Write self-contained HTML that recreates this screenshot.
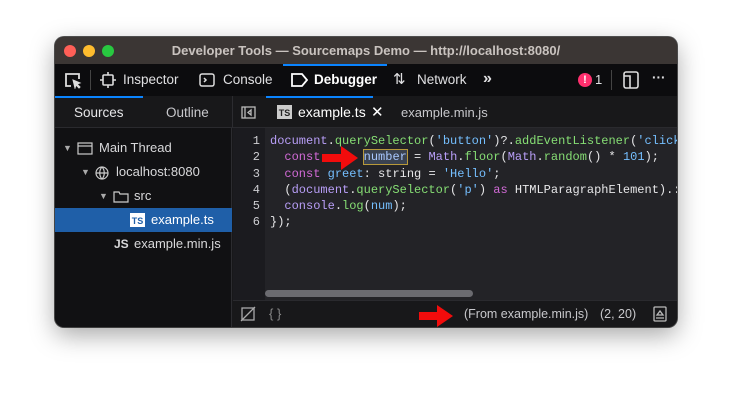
<!DOCTYPE html>
<html><head><meta charset="utf-8"><style>
*{box-sizing:border-box;margin:0;padding:0}
body{width:732px;height:401px;background:#fff;position:relative;overflow:hidden;font-family:"Liberation Sans",sans-serif}
.win{position:absolute;left:55px;top:37px;width:622px;height:290px;border-radius:9px;overflow:hidden;background:#18181a;box-shadow:0 8px 25px rgba(0,0,0,.35),0 0 0 1px #555}
.title{position:absolute;left:0;top:0;width:622px;height:27px;background:#3b3634;color:#c9c3bf;font-weight:bold;font-size:13px;text-align:center;line-height:27px}
.dot{position:absolute;top:8px;width:12px;height:12px;border-radius:50%}
.tb{position:absolute;left:0;top:27px;width:622px;height:32px;background:#0c0c0e;color:#e0e0e2;font-size:13.5px}
.tb span{position:absolute;top:8px}
.tabs{position:absolute;left:0;top:59px;width:622px;height:32px;background:#18181a;border-bottom:1px solid #2a2a2e;font-size:13.5px;color:#e6e6e8}
.side{position:absolute;left:0;top:91px;width:177px;height:199px;background:#111113;border-right:1px solid #2c2c30;color:#d8d8da;font-size:13px}
.side div{position:absolute;height:24px;line-height:24px}
.gut{position:absolute;left:178px;top:91px;width:32px;height:172px;background:#1b1b1f;color:#cfcfd3;font:12px "Liberation Mono",monospace;text-align:right;padding-right:5px;padding-top:5px;line-height:16.3px}
.code{position:absolute;left:210px;top:91px;width:412px;height:172px;background:#232327;font:12px "Liberation Mono",monospace;color:#e6e6e8;padding-left:5px;padding-top:5px;line-height:16.3px;white-space:pre;overflow:hidden}
.k{color:#d16ad6}.p{color:#b89ef7}.g{color:#86de74}.s{color:#75bfff}.n{color:#75bfff}
.bot{position:absolute;left:178px;top:263px;width:444px;height:27px;background:#18181a;border-top:1px solid #2a2a2e;color:#c8c8cc;font-size:12.5px;white-space:nowrap}
</style></head><body>
<div class="win">
<div class="title">Developer Tools — Sourcemaps Demo — http://localhost:8080/
<div class="dot" style="left:9px;background:#fe5f57"></div><div class="dot" style="left:28px;background:#febc2e"></div><div class="dot" style="left:47px;background:#28c840"></div></div>
<div class="tb">
<div style="position:absolute;left:228px;top:0;width:104px;height:2px;background:#0a84ff"></div>
<svg style="position:absolute;left:9px;top:8px" width="18" height="17" viewBox="0 0 18 17" fill="none" stroke="#ddd" stroke-width="1.8"><path d="M7 14H2V2h13v5"/><path d="M9 8l7 3-3 1 3 3-1 1-3-3-1 3z" fill="#ddd" stroke-width="1"/></svg>
<div style="position:absolute;left:35px;top:6px;width:1px;height:20px;background:#444"></div>
<svg style="position:absolute;left:45px;top:8px" width="16" height="16" viewBox="0 0 16 16" fill="none" stroke="#ddd" stroke-width="1.6"><rect x="3" y="3" width="10" height="10" rx="1"/><path d="M8 0v3M8 13v3M0 8h3M13 8h3"/></svg>
<span style="left:68px">Inspector</span>
<svg style="position:absolute;left:144px;top:8px" width="16" height="16" viewBox="0 0 16 16" fill="none" stroke="#ddd" stroke-width="1.5"><rect x="1" y="2" width="14" height="12" rx="2"/><path d="M5 6l2 2-2 2"/></svg>
<span style="left:168px">Console</span>
<svg style="position:absolute;left:236px;top:9px" width="17" height="14" viewBox="0 0 17 14" fill="none" stroke="#fff" stroke-width="1.8"><path d="M1 1h10l5 6-5 6H1z"/></svg>
<span style="left:259px;font-weight:bold;color:#fff">Debugger</span>
<span style="left:338px;font-size:15px;top:6px">⇅</span>
<span style="left:362px">Network</span>
<span style="left:428px;font-size:16px;top:6px;font-weight:bold">»</span>
<div style="position:absolute;left:523px;top:9px;width:14px;height:14px;border-radius:50%;background:#ff2f6d;color:#fff;font-size:11px;font-weight:bold;text-align:center;line-height:14px">!</div>
<span style="left:540px;font-size:13px">1</span>
<div style="position:absolute;left:556px;top:6px;width:1px;height:20px;background:#444"></div>
<svg style="position:absolute;left:568px;top:7px" width="16" height="18" viewBox="0 0 16 18" fill="none" stroke="#ddd" stroke-width="1.6"><rect x="1" y="1" width="14" height="16" rx="2"/><path d="M1 5h6v12"/></svg>
<span style="left:597px;top:6px;font-weight:bold">···</span>
</div>
<div class="tabs">
<div style="position:absolute;left:0;top:0;width:88px;height:2px;background:#0a84ff"></div>
<div style="position:absolute;left:211px;top:0;width:107px;height:2px;background:#0a84ff"></div>
<span style="position:absolute;left:19px;top:9px">Sources</span>
<span style="position:absolute;left:111px;top:9px;color:#c8c8cc">Outline</span>
<div style="position:absolute;left:177px;top:0;width:1px;height:32px;background:#2c2c30"></div>
<svg style="position:absolute;left:186px;top:10px" width="15" height="13" viewBox="0 0 15 13" fill="none" stroke="#bbb" stroke-width="1.3"><rect x="1" y="1" width="13" height="11"/><path d="M4 1v11M10 4l-3 2.5 3 2.5z"/></svg>
<div style="position:absolute;left:222px;top:9px;width:15px;height:14px;background:#ccc;color:#222;font-size:9px;font-weight:bold;line-height:16px;text-align:center">TS</div>
<span style="position:absolute;left:243px;top:8px;color:#fff;font-size:14px">example.ts</span>
<span style="position:absolute;left:316px;top:7px;color:#fff;font-size:15px">✕</span>
<span style="position:absolute;left:346px;top:9px;color:#c8c8cc;font-size:13px">example.min.js</span>
</div>
<div class="side">
<div style="left:8px;top:8px;font-size:9px;color:#aaa">▼</div>
<svg style="position:absolute;left:22px;top:14px" width="16" height="13" viewBox="0 0 16 13" fill="none" stroke="#ccc" stroke-width="1.2"><rect x="1" y="1" width="14" height="11"/><path d="M1 4h14"/></svg>
<div style="left:44px;top:8px">Main Thread</div>
<div style="left:26px;top:32px;font-size:9px;color:#aaa">▼</div>
<svg style="position:absolute;left:40px;top:38px" width="14" height="14" viewBox="0 0 14 14" fill="none" stroke="#ccc" stroke-width="1.2"><circle cx="7" cy="7" r="6"/><path d="M1 7h12M7 1c-3 3-3 9 0 12M7 1c3 3 3 9 0 12"/></svg>
<div style="left:61px;top:32px">localhost:8080</div>
<div style="left:44px;top:56px;font-size:9px;color:#aaa">▼</div>
<svg style="position:absolute;left:58px;top:62px" width="16" height="13" viewBox="0 0 16 13" fill="none" stroke="#ccc" stroke-width="1.2"><path d="M1 2h5l1 2h8v8H1z"/></svg>
<div style="left:79px;top:56px">src</div>
<div style="left:0;top:80px;width:177px;background:#1f5fa8"></div>
<div style="left:75px;top:85px;width:15px;height:14px;background:#fff;color:#1f5fa8;font-size:9px;font-weight:bold;line-height:16px;text-align:center">TS</div>
<div style="left:96px;top:80px;color:#fff">example.ts</div>
<div style="left:59px;top:104px;font-weight:bold;font-size:12px">JS</div>
<div style="left:79px;top:104px">example.min.js</div>
</div>
<div class="gut">1<br>2<br>3<br>4<br>5<br>6</div>
<div class="code"><span class="p">document</span>.<span class="g">querySelector</span>(<span class="s">'button'</span>)?.<span class="g">addEventListener</span>(<span class="s">'click</span>
  <span class="k">const</span>      <span style="outline:1.5px solid #b8993a;background:#3a4250;color:#a9c8ff">number</span> = <span class="p">Math</span>.<span class="g">floor</span>(<span class="p">Math</span>.<span class="g">random</span>() * <span class="n">101</span>);
  <span class="k">const</span> <span class="s">greet</span>: string = <span class="s">'Hello'</span>;
  (<span class="p">document</span>.<span class="g">querySelector</span>(<span class="s">'p'</span>) <span class="k">as</span> HTMLParagraphElement).:
  <span class="p">console</span>.<span class="g">log</span>(<span class="s">num</span>);
});</div>
<div style="position:absolute;left:210px;top:253px;width:208px;height:7px;border-radius:4px;background:#6b6b70"></div>
<svg style="position:absolute;left:266px;top:108px" width="38" height="26" viewBox="0 0 38 26"><path d="M1 9h19V1l17 12-17 12v-8H1z" fill="#f20c0c"/></svg>
<div class="bot">
<svg style="position:absolute;left:7px;top:5px" width="16" height="16" viewBox="0 0 16 16" fill="none" stroke="#aaa" stroke-width="1.3"><rect x="2" y="2" width="12" height="12"/><path d="M1 15L15 1M5 11l6-6"/></svg>
<span style="position:absolute;left:36px;top:5px;color:#888;font-size:13px">{ }</span>
<svg style="position:absolute;left:185px;top:3px" width="36" height="24" viewBox="0 0 36 24"><path d="M1 8h18V1l16 11-16 11v-7H1z" fill="#f20c0c"/></svg>
<span style="position:absolute;left:231px;top:6px">(From example.min.js)</span>
<span style="position:absolute;left:367px;top:6px">(2, 20)</span>
<svg style="position:absolute;left:420px;top:5px" width="14" height="16" viewBox="0 0 14 16" fill="none" stroke="#bbb" stroke-width="1.3"><rect x="1" y="1" width="12" height="14" rx="1"/><path d="M4 9l3-4 3 4zM3 12h8"/></svg>
</div>
</div>
</body></html>
